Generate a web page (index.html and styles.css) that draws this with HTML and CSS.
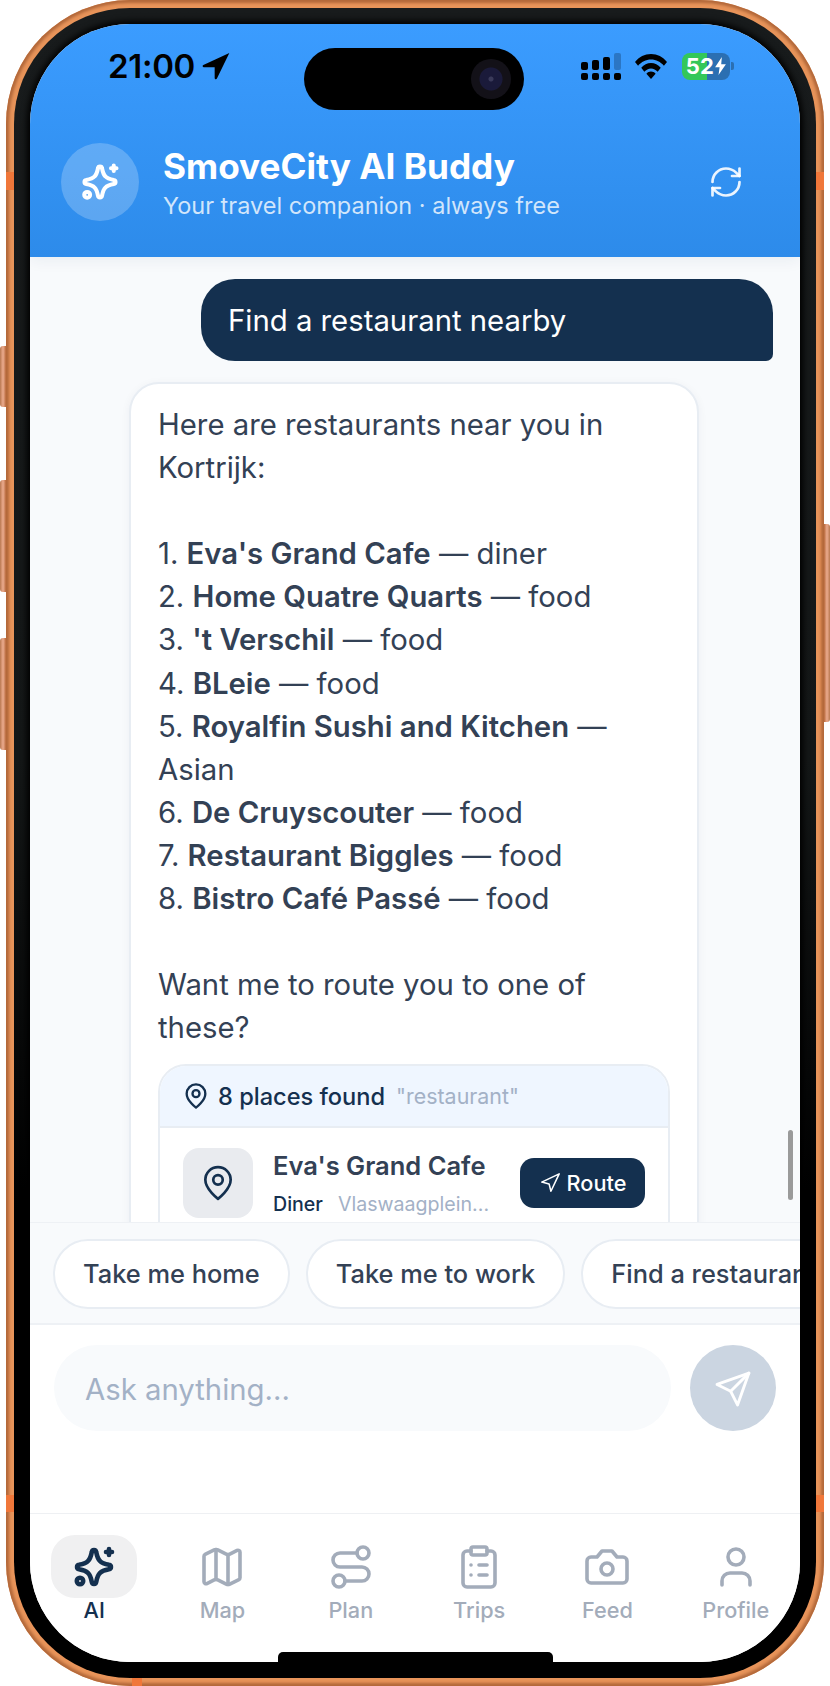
FILE: index.html
```html
<!DOCTYPE html>
<html lang="en">
<head>
<meta charset="utf-8">
<title>SmoveCity AI Buddy</title>
<link rel="stylesheet" href="styles.css">
</head>
<body>
<svg class="defs" width="0" height="0" aria-hidden="true">
  <defs>
    <symbol id="i-spark" viewBox="0 0 24 24">
      <path d="M10.900 4.500c.2-1.300 2-1.300 2.200 0 .5 2.600 1 3.700 1.900 4.500.8.9 1.900 1.400 4.500 1.900 1.300.2 1.300 2 0 2.200-2.600.5-3.700 1-4.500 1.900-.9.8-1.400 1.900-1.900 4.500-.2 1.300-2 1.300-2.200 0-.5-2.600-1-3.700-1.900-4.500-.8-.9-1.900-1.400-4.500-1.900-1.300-.2-1.300-2 0-2.200 2.600-.5 3.700-1 4.500-1.900.9-.8 1.400-1.900 1.900-4.500z"/>
      <path d="M19.500 3v3M18 4.500h3"/>
      <circle cx="5" cy="19" r="1.600"/>
    </symbol>
    <symbol id="i-pin" viewBox="0 0 24 24">
      <path d="M20 10c0 6-8 12-8 12s-8-6-8-12a8 8 0 0 1 16 0Z"/>
      <circle cx="12" cy="10" r="3"/>
    </symbol>
    <symbol id="i-nav" viewBox="0 0 24 24">
      <polygon points="3 11 22 2 13 21 11 13 3 11"/>
    </symbol>
  </defs>
</svg>
<main class="phone">
  <span class="side side-l1"></span>
  <span class="side side-l2"></span>
  <span class="side side-l3"></span>
  <span class="side side-r1"></span>
  <span class="band band-lt"></span>
  <span class="band band-rt"></span>
  <span class="band band-lb"></span>
  <span class="band band-rb"></span>
  <span class="band band-b"></span>
  <div class="bezel">
    <div class="screen">
      <div class="island"><span class="lens"></span></div>
      <span class="home-bar"></span>

      <header class="top">
        <div class="status">
          <div class="status-left">
            <span class="time">21:00</span>
            <svg class="loc" viewBox="0 0 24 24"><path d="M22 2.200 2.500 11.200c-.9.4-.6 1.700.4 1.700H11v8.100c0 1 1.300 1.300 1.700.4z"/></svg>
          </div>
          <div class="status-right">
            <div class="signal">
              <div class="sig-col"><i class="h1"></i><i></i></div>
              <div class="sig-col"><i class="h2"></i><i></i></div>
              <div class="sig-col"><i class="h3"></i><i></i></div>
              <div class="sig-col"><i class="h4 dim"></i><i></i></div>
            </div>
            <svg class="wifi" viewBox="1.400 4 31.200 20" preserveAspectRatio="none"><path d="M17 4C10.800 4 5.400 6.400 1.400 10.300l3 3.100C7.600 10.300 12 8.400 17 8.400s9.400 1.900 12.600 5l3-3.100C28.600 6.400 23.200 4 17 4z"/><path d="M17 11.200c-3.700 0-7 1.400-9.500 3.800l3 3.100c1.700-1.600 4-2.600 6.500-2.600s4.800 1 6.500 2.600l3-3.100c-2.500-2.400-5.800-3.800-9.500-3.800z"/><path d="M17 18c-1.800 0-3.400.7-4.500 1.800L17 24l4.500-4.200C20.400 18.700 18.800 18 17 18z"/></svg>
            <div class="battery">
              <div class="batt-body"><span class="batt-num">52</span><svg class="bolt" viewBox="0 0 12 20"><path d="M7.500 0 0 11.500h5L3.800 20 12 8H6.800z"/></svg></div>
              <span class="batt-cap"></span>
            </div>
          </div>
        </div>
        <div class="brand">
          <div class="avatar"><svg class="ic ic-avatar"><use href="#i-spark"/></svg></div>
          <div class="brand-text">
            <h1>SmoveCity AI Buddy</h1>
            <p>Your travel companion · always free</p>
          </div>
          <svg class="refresh" viewBox="0 0 24 24"><path d="M3 12a9 9 0 0 1 9-9 9.750 9.750 0 0 1 6.740 2.740L21 8"/><path d="M21 3v5h-5"/><path d="M21 12a9 9 0 0 1-9 9 9.750 9.750 0 0 1-6.740-2.740L3 16"/><path d="M8 16H3v5"/></svg>
        </div>
      </header>

      <section class="messages">
        <div class="msg-user">Find a restaurant nearby</div>
        <article class="msg-ai">
          <div class="ai-text">
            <p class="para">Here are restaurants near you in<br>Kortrijk:</p>
            <ol class="list">
              <li>1. <strong>Eva's Grand Cafe</strong> — diner</li>
              <li>2. <strong>Home Quatre Quarts</strong> — food</li>
              <li>3. <strong>'t Verschil</strong> — food</li>
              <li>4. <strong>BLeie</strong> — food</li>
              <li>5. <strong>Royalfin Sushi and Kitchen</strong> —<br>Asian</li>
              <li>6. <strong>De Cruyscouter</strong> — food</li>
              <li>7. <strong>Restaurant Biggles</strong> — food</li>
              <li>8. <strong>Bistro Café Passé</strong> — food</li>
            </ol>
            <p class="para">Want me to route you to one of<br>these?</p>
          </div>
          <div class="places">
            <div class="places-head">
              <svg class="ic ic-head"><use href="#i-pin"/></svg>
              <span class="places-count">8 places found</span>
              <span class="places-query">"restaurant"</span>
            </div>
            <div class="place">
              <div class="thumb"><svg class="ic ic-thumb"><use href="#i-pin"/></svg></div>
              <div class="place-info">
                <div class="place-name">Eva's Grand Cafe</div>
                <div class="place-meta"><span class="place-type">Diner</span><span class="place-addr">Vlaswaagplein...</span></div>
              </div>
              <div class="route-btn"><svg class="ic ic-route"><use href="#i-nav"/></svg>Route</div>
            </div>
          </div>
        </article>
        <span class="scrollbar"></span>
      </section>

      <section class="chips">
        <span class="chip">Take me home</span>
        <span class="chip">Take me to work</span>
        <span class="chip chip-clip">Find a restaurant</span>
      </section>

      <section class="composer">
        <div class="input">Ask anything...</div>
        <div class="send"><svg class="ic ic-send" viewBox="-2 3 23 23"><path d="M19.070 4.930-.73 12l8.490 4.240L12 24.730z"/><path d="M7.760 16.240 19.070 4.930"/></svg></div>
      </section>

      <nav class="tabs">
        <div class="tab active">
          <span class="tab-icon"><svg class="ic ic-tab"><use href="#i-spark"/></svg></span>
          <span class="tab-label">AI</span>
        </div>
        <div class="tab">
          <span class="tab-icon"><svg class="ic ic-tab" viewBox="0 0 24 24"><path d="M14.106 5.553a2 2 0 0 0 1.788 0l3.659-1.830A1 1 0 0 1 21 4.619v12.764a1 1 0 0 1-.553.894l-4.553 2.277a2 2 0 0 1-1.788 0l-4.212-2.106a2 2 0 0 0-1.788 0l-3.659 1.830A1 1 0 0 1 3 19.381V6.618a1 1 0 0 1 .553-.894l4.553-2.277a2 2 0 0 1 1.788 0z"/><path d="M15 5.764v15"/><path d="M9 3.236v15"/></svg></span>
          <span class="tab-label">Map</span>
        </div>
        <div class="tab">
          <span class="tab-icon"><svg class="ic ic-tab" viewBox="0 0 24 24"><circle cx="6" cy="19" r="3"/><path d="M9 19h8.500a3.500 3.500 0 0 0 0-7h-11a3.500 3.500 0 0 1 0-7H15"/><circle cx="18" cy="5" r="3"/></svg></span>
          <span class="tab-label">Plan</span>
        </div>
        <div class="tab">
          <span class="tab-icon"><svg class="ic ic-tab" viewBox="0 0 24 24"><rect width="8" height="4" x="8" y="2" rx="1" ry="1"/><path d="M16 4h2a2 2 0 0 1 2 2v14a2 2 0 0 1-2 2H6a2 2 0 0 1-2-2V6a2 2 0 0 1 2-2h2"/><path d="M12 11h4"/><path d="M12 16h4"/><path d="M8 11h.01"/><path d="M8 16h.01"/></svg></span>
          <span class="tab-label">Trips</span>
        </div>
        <div class="tab">
          <span class="tab-icon"><svg class="ic ic-tab" viewBox="0 0 24 24"><path d="M14.500 4h-5L7 7H4a2 2 0 0 0-2 2v9a2 2 0 0 0 2 2h16a2 2 0 0 0 2-2V9a2 2 0 0 0-2-2h-3l-2.500-3z"/><circle cx="12" cy="13" r="3"/></svg></span>
          <span class="tab-label">Feed</span>
        </div>
        <div class="tab">
          <span class="tab-icon"><svg class="ic ic-tab" viewBox="0 0 24 24"><path d="M19 21v-2a4 4 0 0 0-4-4H9a4 4 0 0 0-4 4v2"/><circle cx="12" cy="7" r="4"/></svg></span>
          <span class="tab-label">Profile</span>
        </div>
      </nav>
    </div>
  </div>
</main>
</body>
</html>
```
FILE: styles.css
```css
* { box-sizing: border-box; }
html, body { margin: 0; padding: 0; background: #fff; }
body { width: 830px; height: 1686px; overflow: hidden; font-family: Inter, "Liberation Sans", sans-serif; }
.defs { position: absolute; }

.phone {
  position: relative;
  width: 818px;
  height: 1686px;
  margin: 0 6px;
  padding: 8px;
  border-radius: 124px;
  background: #e8945a;
  box-shadow: inset 0 0 3px 3px #b2683a;
}
.bezel {
  height: 100%;
  padding: 16px;
  border-radius: 116px;
  background: linear-gradient(180deg, #181b1c 0%, #141717 45%, #000 72%);
}
.screen {
  position: relative;
  height: 100%;
  display: flex;
  flex-direction: column;
  overflow: hidden;
  border-radius: 100px;
  background: #fff;
  box-shadow: 0 0 6px 3px #000;
}

.side { position: absolute; width: 6px; }
.side-l1, .side-l2, .side-l3 { left: -6px; border-radius: 3px 0 0 3px; background: linear-gradient(90deg, #b87850, #e3a283 40%, #e3a283 60%, #b8683a); }
.side-l1 { top: 346px; height: 61px; }
.side-l2 { top: 480px; height: 112px; }
.side-l3 { top: 638px; height: 112px; }
.side-r1 { right: -6px; top: 524px; height: 198px; border-radius: 0 3px 3px 0; background: linear-gradient(90deg, #b8683a, #e3a283 40%, #e3a283 60%, #b87850); }

.band { position: absolute; background: #f0773a; }
.band-lt { left: 0; top: 172px; width: 8px; height: 18px; }
.band-rt { right: 0; top: 172px; width: 8px; height: 18px; }
.band-lb { left: 0; top: 1495px; width: 8px; height: 17px; }
.band-rb { right: 0; top: 1495px; width: 8px; height: 17px; }
.band-b { left: 126px; bottom: 0; width: 10px; height: 8px; }

.island {
  position: absolute;
  left: 274px;
  top: 24px;
  z-index: 3;
  width: 220px;
  height: 62px;
  border-radius: 31px;
  background: #000;
}
.lens {
  position: absolute;
  right: 13px;
  top: 11px;
  width: 40px;
  height: 40px;
  border-radius: 50%;
  background: radial-gradient(circle, #3a3a5a 0 2px, #1a1a3a 3px 11px, #131118 12px 20px);
}
.home-bar {
  position: absolute;
  left: 248px;
  bottom: 0;
  z-index: 3;
  width: 275px;
  height: 10px;
  border-radius: 5px 5px 0 0;
  background: #000;
}

.top {
  position: relative;
  z-index: 2;
  flex: none;
  height: 233px;
  padding: 28px 0 0;
  background: linear-gradient(180deg, #3b9cff 0%, #2d8bea 100%);
  box-shadow: 0 4px 14px rgba(20, 48, 79, .06);
  color: #fff;
}
.status {
  display: flex;
  align-items: center;
  justify-content: space-between;
  height: 28px;
  padding: 0 66px 0 78px;
}
.status-left { display: flex; align-items: center; gap: 5px; }
.time { font-size: 33px; font-weight: 600; color: #000; line-height: 28px; letter-spacing: -.3px; }
.loc { width: 32px; height: 32px; fill: #000; }
.status-right { display: flex; align-items: center; }
.signal { display: flex; align-items: flex-end; gap: 4px; height: 27px; }
.sig-col { display: flex; flex-direction: column; justify-content: flex-end; gap: 3px; width: 7px; }
.sig-col i { display: block; height: 7px; border-radius: 2px; background: #000; }
.sig-col i.h1 { height: 8px; }
.sig-col i.h2 { height: 10px; }
.sig-col i.h3 { height: 13px; }
.sig-col i.h4 { height: 17px; }
.sig-col i.dim { background: #2b76c4; }
.wifi { width: 32px; height: 25px; margin-left: 14px; fill: #000; }
.battery { display: flex; align-items: center; margin-left: 15px; }
.batt-body {
  display: flex;
  align-items: center;
  justify-content: center;
  width: 48px;
  height: 27px;
  border-radius: 8px;
  background: linear-gradient(90deg, #34c759 52%, #2b6fb2 52%);
}
.batt-num { font-size: 22px; font-weight: 700; line-height: 1; color: #fff; letter-spacing: .3px; }
.bolt { width: 11px; height: 18px; margin-left: 1px; fill: #fff; }
.batt-cap { width: 3px; height: 8px; margin-left: 1px; border-radius: 0 2px 2px 0; background: #2b6fb2; }

.brand {
  display: flex;
  align-items: center;
  margin-top: 63px;
  padding: 0 0 0 31px;
}
.avatar {
  display: flex;
  flex: none;
  align-items: center;
  justify-content: center;
  width: 78px;
  height: 78px;
  border-radius: 50%;
  background: rgba(255, 255, 255, .22);
}
.brand-text { flex: 1; margin-left: 24px; padding-top: 2px; }
.brand h1 { margin: 0; font-size: 35.2px; font-weight: 700; line-height: 40px; color: #fff; }
.brand p { margin: 4px 0 -2px; font-size: 23.5px; line-height: 32px; color: rgba(255, 255, 255, .78); }
.refresh { flex: none; width: 36px; height: 36px; margin-right: 56px; fill: none; stroke: rgba(255, 255, 255, .9); stroke-width: 1.8; stroke-linecap: round; stroke-linejoin: round; }

.ic { display: block; fill: none; stroke: currentColor; stroke-width: 2; stroke-linecap: round; stroke-linejoin: round; }
.ic-avatar { width: 44px; height: 44px; color: #fff; stroke-width: 2.2; }

.messages {
  position: relative;
  flex: 1;
  min-height: 0;
  overflow: hidden;
  padding: 22px 27px 0 99px;
  background: #f8fafc;
}
.msg-user {
  width: 572px;
  height: 82px;
  margin-left: 72px;
  padding: 0 27px;
  border-radius: 34px 34px 7px 34px;
  background: #14304f;
  color: #fff;
  font-size: 29.3px;
  line-height: 84px;
}
.msg-ai {
  width: 570px;
  margin-top: 21px;
  padding: 19px 27px 27px;
  border: 2px solid #e8edf3;
  border-radius: 30px;
  background: #fff;
  box-shadow: 0 2px 10px rgba(20, 48, 79, .05);
  color: #334155;
}
.ai-text { font-size: 29.3px; line-height: 43.1px; }
.para { margin: 0; }
.list { margin: 43.1px 0; padding: 0; list-style: none; }
.ai-text strong { font-weight: 600; }

.places {
  min-height: 320px;
  margin-top: 15px;
  overflow: hidden;
  border: 2px solid #e8edf3;
  border-radius: 28px;
  background: #fff;
}
.places-head {
  display: flex;
  align-items: center;
  height: 62px;
  padding: 0 22px;
  border-bottom: 2px solid #e8edf3;
  background: #eff6ff;
}
.ic-head { width: 28px; height: 28px; color: #14304f; }
.places-count { margin-left: 8px; font-size: 23.6px; font-weight: 500; color: #14304f; }
.places-query { margin-left: 11px; font-size: 21.4px; color: #a3b1c6; }
.place { display: flex; align-items: center; padding: 20px 23px; }
.thumb {
  display: flex;
  flex: none;
  align-items: center;
  justify-content: center;
  width: 70px;
  height: 70px;
  border-radius: 16px;
  background: #e9ebef;
}
.ic-thumb { width: 38px; height: 38px; color: #14304f; stroke-width: 1.7; }
.place-info { flex: 1; min-width: 0; margin-left: 20px; }
.place-name { font-size: 25.5px; font-weight: 600; line-height: 34px; color: #334155; }
.place-meta { display: flex; margin-top: 7px; font-size: 19.6px; line-height: 28px; white-space: nowrap; }
.place-type { font-weight: 500; color: #14304f; }
.place-addr { margin-left: 15px; color: #a3b1c6; }
.route-btn {
  display: flex;
  flex: none;
  align-items: center;
  justify-content: center;
  gap: 6px;
  width: 125px;
  height: 50px;
  border-radius: 14px;
  background: #14304f;
  color: #fff;
  font-size: 21.7px;
  font-weight: 500;
}
.ic-route { width: 22px; height: 22px; color: #fff; stroke-width: 1.7; }
.scrollbar { position: absolute; right: 7px; top: 873px; width: 5px; height: 70px; border-radius: 3px; background: #9a9a9a; }

.chips {
  flex: none;
  display: flex;
  gap: 16px;
  height: 103px;
  padding: 16px 0 0 23px;
  overflow: hidden;
  border-top: 1px solid #eef1f5;
  border-bottom: 2px solid #eef1f5;
  background: #f8fafc;
}
.chip {
  flex: none;
  height: 70px;
  padding: 0 28px;
  border: 2px solid #e8edf3;
  border-radius: 35px;
  background: #fff;
  color: #334155;
  font-size: 25.4px;
  font-weight: 500;
  line-height: 66px;
}
.chip-clip { white-space: nowrap; }

.composer {
  flex: none;
  display: flex;
  gap: 19px;
  height: 188px;
  padding: 20px 24px 0 24px;
  background: #fff;
}
.input {
  flex: 1;
  height: 86px;
  padding: 0 31px;
  border-radius: 43px;
  background: #f8fafc;
  color: #a3b1c6;
  font-size: 29.3px;
  line-height: 90px;
}
.send {
  display: flex;
  flex: none;
  align-items: center;
  justify-content: center;
  width: 86px;
  height: 86px;
  border-radius: 50%;
  background: #cbd5e1;
}
.ic-send { width: 37px; height: 37px; color: #fff; stroke-width: 1.8; overflow: visible; }

.tabs {
  flex: none;
  display: grid;
  grid-template-columns: repeat(6, 1fr);
  height: 149px;
  padding-top: 21px;
  border-top: 1px solid #eef0f3;
  background: #fff;
  color: #a3acba;
}
.tab { display: flex; flex-direction: column; align-items: center; }
.tab-icon {
  display: flex;
  align-items: center;
  justify-content: center;
  width: 86px;
  height: 63px;
  border-radius: 24px;
}
.ic-tab { width: 48px; height: 48px; stroke-width: 1.8; }
.tab-label { margin-top: -3px; font-size: 21.7px; font-weight: 500; line-height: 30px; }
.tab.active { color: #14304f; }
.tab.active .tab-icon { background: #f0f0f1; }
.tab.active .ic-tab { stroke-width: 2.3; }
```
